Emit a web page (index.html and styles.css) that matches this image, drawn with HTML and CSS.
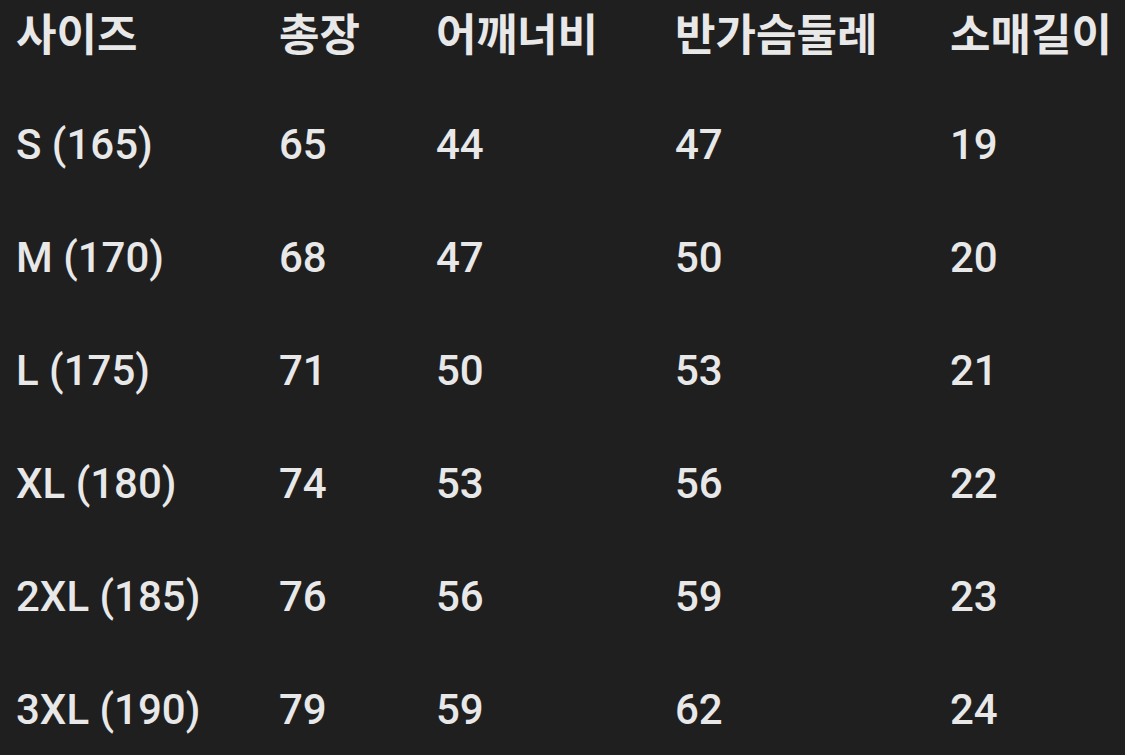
FILE: index.html
```html
<!DOCTYPE html>
<html lang="ko">
<head>
<meta charset="utf-8">
<title>사이즈표</title>
<link rel="stylesheet" href="styles.css">
</head>
<body>
<div class="size-table">
  <div class="cell head">사이즈</div><div class="cell head">총장</div><div class="cell head">어깨너비</div><div class="cell head">반가슴둘레</div><div class="cell head">소매길이</div>
  <div class="cell">S (165)</div><div class="cell">65</div><div class="cell">44</div><div class="cell">47</div><div class="cell">19</div>
  <div class="cell">M (170)</div><div class="cell">68</div><div class="cell">47</div><div class="cell">50</div><div class="cell">20</div>
  <div class="cell">L (175)</div><div class="cell">71</div><div class="cell">50</div><div class="cell">53</div><div class="cell">21</div>
  <div class="cell">XL (180)</div><div class="cell">74</div><div class="cell">53</div><div class="cell">56</div><div class="cell">22</div>
  <div class="cell">2XL (185)</div><div class="cell">76</div><div class="cell">56</div><div class="cell">59</div><div class="cell">23</div>
  <div class="cell">3XL (190)</div><div class="cell">79</div><div class="cell">59</div><div class="cell">62</div><div class="cell">24</div>
</div>
</body>
</html>
```
FILE: styles.css
```css
html, body {
  margin: 0;
  padding: 0;
  background: #1f1f20;
  width: 1125px;
  height: 755px;
  overflow: hidden;
}
.size-table {
  display: grid;
  grid-template-columns: 263px 157px 239px 275px 1fr;
  row-gap: 49px;
  padding-left: 16px;
  color: #e8e8e8;
  font-family: Roboto, "Noto Sans CJK KR", sans-serif;
  font-size: 42px;
  font-weight: 500;
}
.cell {
  line-height: 64px;
  white-space: nowrap;
}
.head {
  font-size: 44px;
  font-weight: 700;
  font-family: "Noto Sans CJK KR", sans-serif;
}
```
